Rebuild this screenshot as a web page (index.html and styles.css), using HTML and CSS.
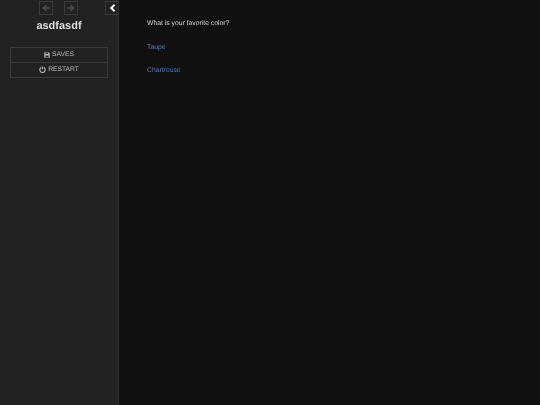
FILE: index.html
```html
<!DOCTYPE html>
<html lang="en">
<head>
    <meta charset="UTF-8">
    <meta name="viewport" content="width=device-width, initial-scale=1.0">
    <title>asdfasdf</title>
    <link rel="stylesheet" href="styles.css">
</head>
<body>

<div class="layout">
    <!-- Sidebar -->
    <div class="sidebar">
        <div class="toolbar">
            <div class="history">
                <button class="tool-button dim">
                    <svg viewBox="0 0 10 10" width="8" height="8"><path d="M5 0.8 L6.2 2 L4.2 4 H9.5 V6 H4.2 L6.2 8 L5 9.2 L0.5 5 Z" fill="currentColor"/></svg>
                </button>
                <button class="tool-button dim">
                    <svg viewBox="0 0 10 10" width="8" height="8"><path d="M5 0.8 L3.8 2 L5.8 4 H0.5 V6 H5.8 L3.8 8 L5 9.2 L9.5 5 Z" fill="currentColor"/></svg>
                </button>
            </div>
            <button class="tool-button toggle">
                <svg viewBox="0 0 8 10" width="7" height="10"><path d="M5.6 0.5 L7.2 2.1 L4.2 5 L7.2 7.9 L5.6 9.5 L1 5 Z" fill="currentColor"/></svg>
            </button>
        </div>

        <h1 class="story-title">asdfasdf</h1>

        <div class="menu">
            <div class="menu-item">
                <svg class="menu-icon" viewBox="0 0 10 10" width="6" height="6"><path d="M0.5 0.5 H8 L9.5 2 V9.5 H0.5 Z M2.5 1.4 V3.4 H7 V1.4 Z M2.4 6 V8.6 H7.6 V6 Z" fill="currentColor" fill-rule="evenodd"/></svg>
                <span class="menu-label">SAVES</span>
            </div>
            <div class="menu-item">
                <svg class="menu-icon" viewBox="0 0 10 10" width="7" height="7"><path d="M3 2.2 A3.8 3.8 0 1 0 7 2.2 M5 0.6 V4.8" fill="none" stroke="currentColor" stroke-width="1.6"/></svg>
                <span class="menu-label">RESTART</span>
            </div>
        </div>
    </div>

    <!-- Passage -->
    <div class="passage">
        <p>What is your favorite color?</p>
        <p><a class="link" href="#">Taupe</a></p>
        <p><a class="link" href="#">Chartreuse</a></p>
    </div>
</div>

</body>
</html>
```

FILE: styles.css
```css
/* Global Styles */
body {
    margin: 0;
    padding: 0;
    font-family: "Liberation Sans", Arial, sans-serif;
    background-color: #111;
    color: #d4d4d4;
    height: 100vh;
    overflow: hidden;
    text-rendering: geometricPrecision;
}
.layout {
    display: flex;
    height: 405px;
}
/* Sidebar */
.sidebar {
    width: 118px;
    flex-shrink: 0;
    background-color: #222;
    border-right: 1px solid #2c2c2c;
}
.toolbar {
    display: flex;
    justify-content: flex-end;
    padding-top: 1px;
    height: 14px;
}
.history {
    display: flex;
    gap: 11px;
    margin-right: 27px;
}
.tool-button {
    display: flex;
    justify-content: center;
    align-items: center;
    box-sizing: border-box;
    width: 14px;
    height: 14px;
    padding: 0;
    background: none;
    border: 1px solid #3a3a3a;
    color: #eee;
}
.tool-button.dim {
    color: #505050;
}
.tool-button.toggle {
    width: 13px;
    border-right: none;
    color: #fff;
}
.story-title {
    margin: 3px 0 13px;
    text-align: center;
    font-size: 11px;
    line-height: 16px;
    font-weight: bold;
    color: #ddd;
    filter: blur(0.2px);
}
.menu {
    margin: 0 10px;
    border: 1px solid #3a3a3a;
}
.menu-item {
    display: flex;
    justify-content: center;
    align-items: center;
    gap: 2px;
    height: 14px;
    font-size: 6.7px;
    line-height: 14px;
    color: #bbb;
}
.menu-item + .menu-item {
    border-top: 1px solid #3a3a3a;
}
.menu-icon {
    margin-bottom: 1px;
}
.menu-label {
    filter: blur(0.2px);
}
/* Passage */
.passage {
    flex: 1;
    padding: 19px 28px;
    font-size: 6.8px;
    line-height: 10px;
    filter: blur(0.2px);
}
.passage p {
    margin: 0 0 13.7px;
}
.link {
    color: #5a76b8;
    text-decoration: none;
}
```
